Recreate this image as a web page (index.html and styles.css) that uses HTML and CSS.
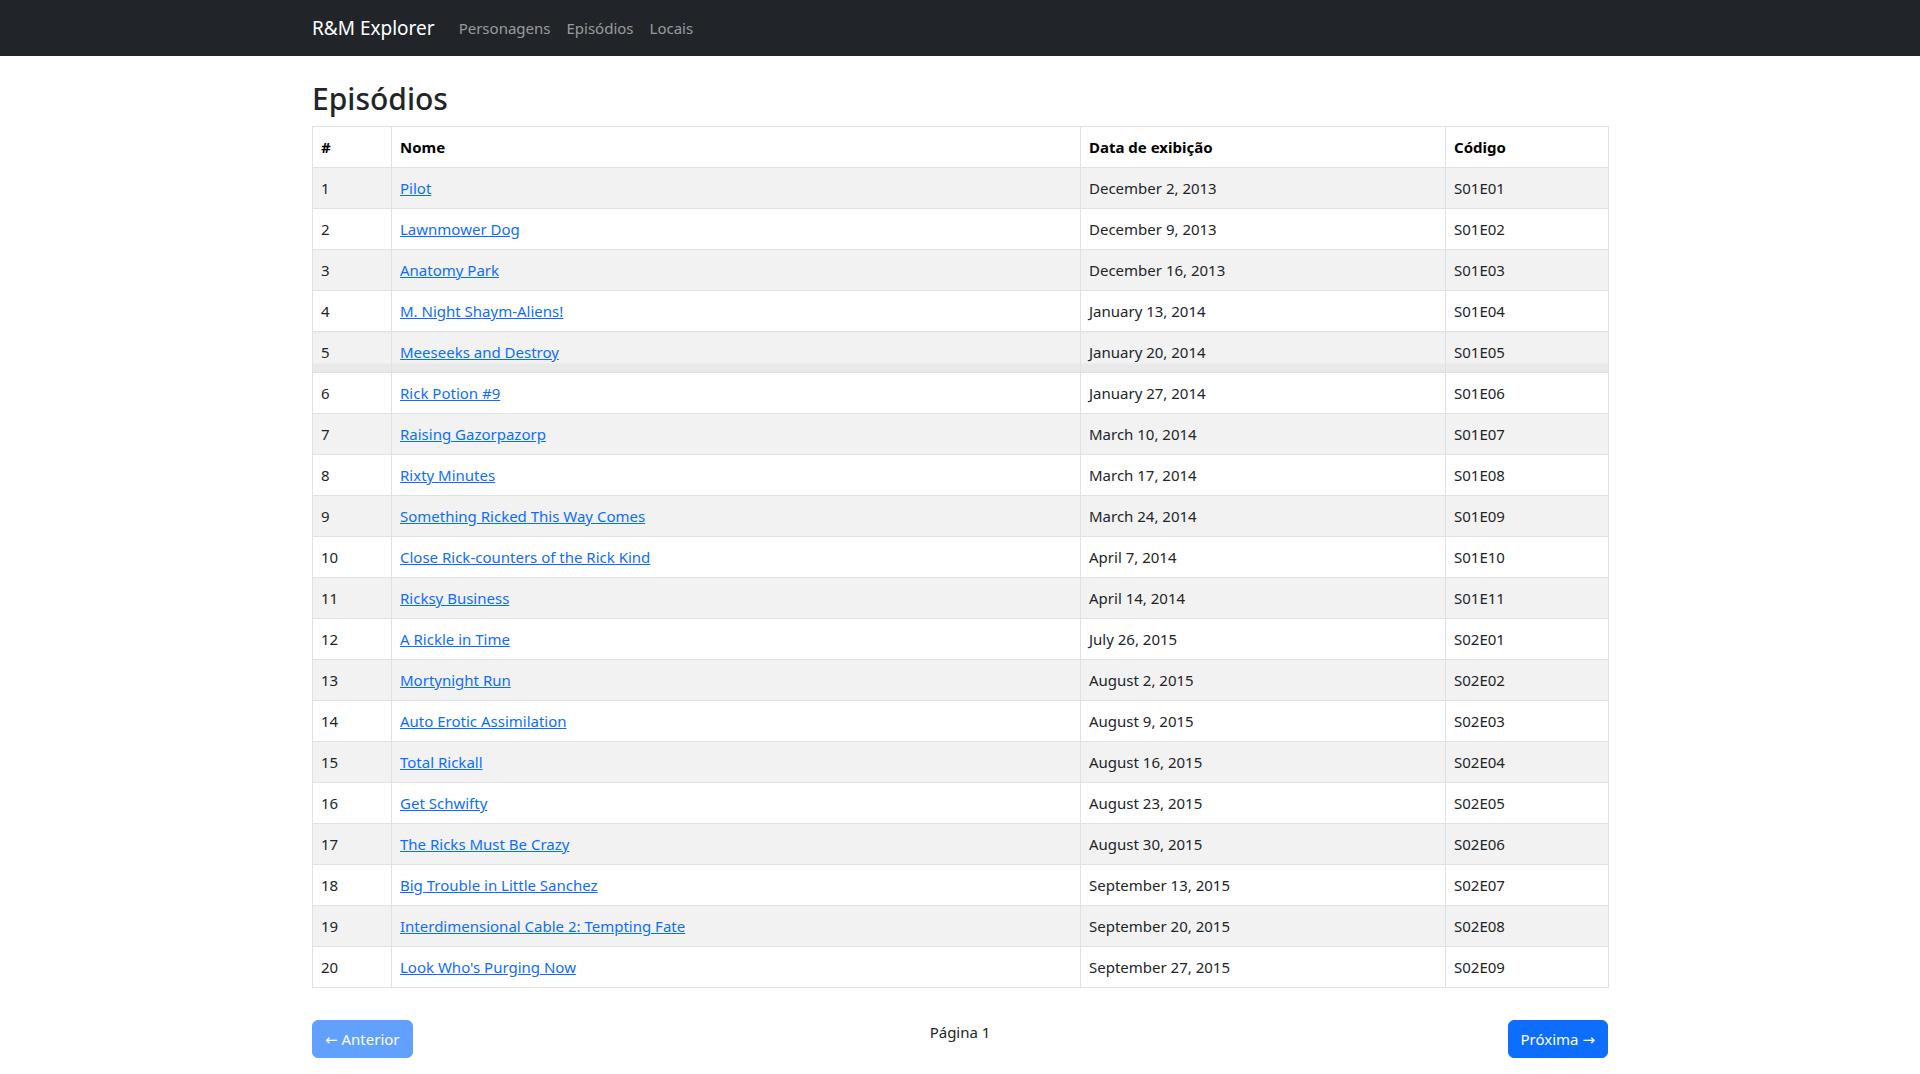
FILE: index.html
```html
<!DOCTYPE html>
<html lang="pt">
<head>
<meta charset="utf-8">
<title>R&amp;M Explorer</title>
<link rel="stylesheet" href="styles.css">
</head>
<body>
<nav class="navbar">
  <div class="container nav-inner">
    <a class="brand" href="#">R&amp;M Explorer</a>
    <ul class="nav-links">
      <li><a href="#">Personagens</a></li>
      <li><a href="#">Episódios</a></li>
      <li><a href="#">Locais</a></li>
    </ul>
  </div>
</nav>
<main class="container main">
  <h1 class="title">Episódios</h1>
  <table class="table">
    <colgroup>
      <col class="c-id"><col class="c-name"><col class="c-date"><col class="c-code">
    </colgroup>
    <thead>
      <tr><th>#</th><th>Nome</th><th>Data de exibição</th><th>Código</th></tr>
    </thead>
    <tbody>
      <tr><td>1</td><td><a href="#">Pilot</a></td><td>December 2, 2013</td><td>S01E01</td></tr>
      <tr><td>2</td><td><a href="#">Lawnmower Dog</a></td><td>December 9, 2013</td><td>S01E02</td></tr>
      <tr><td>3</td><td><a href="#">Anatomy Park</a></td><td>December 16, 2013</td><td>S01E03</td></tr>
      <tr><td>4</td><td><a href="#">M. Night Shaym-Aliens!</a></td><td>January 13, 2014</td><td>S01E04</td></tr>
      <tr class="artifact"><td>5</td><td><a href="#">Meeseeks and Destroy</a></td><td>January 20, 2014</td><td>S01E05</td></tr>
      <tr><td>6</td><td><a href="#">Rick Potion #9</a></td><td>January 27, 2014</td><td>S01E06</td></tr>
      <tr><td>7</td><td><a href="#">Raising Gazorpazorp</a></td><td>March 10, 2014</td><td>S01E07</td></tr>
      <tr><td>8</td><td><a href="#">Rixty Minutes</a></td><td>March 17, 2014</td><td>S01E08</td></tr>
      <tr><td>9</td><td><a href="#">Something Ricked This Way Comes</a></td><td>March 24, 2014</td><td>S01E09</td></tr>
      <tr><td>10</td><td><a href="#">Close Rick-counters of the Rick Kind</a></td><td>April 7, 2014</td><td>S01E10</td></tr>
      <tr><td>11</td><td><a href="#">Ricksy Business</a></td><td>April 14, 2014</td><td>S01E11</td></tr>
      <tr><td>12</td><td><a href="#">A Rickle in Time</a></td><td>July 26, 2015</td><td>S02E01</td></tr>
      <tr><td>13</td><td><a href="#">Mortynight Run</a></td><td>August 2, 2015</td><td>S02E02</td></tr>
      <tr><td>14</td><td><a href="#">Auto Erotic Assimilation</a></td><td>August 9, 2015</td><td>S02E03</td></tr>
      <tr><td>15</td><td><a href="#">Total Rickall</a></td><td>August 16, 2015</td><td>S02E04</td></tr>
      <tr><td>16</td><td><a href="#">Get Schwifty</a></td><td>August 23, 2015</td><td>S02E05</td></tr>
      <tr><td>17</td><td><a href="#">The Ricks Must Be Crazy</a></td><td>August 30, 2015</td><td>S02E06</td></tr>
      <tr><td>18</td><td><a href="#">Big Trouble in Little Sanchez</a></td><td>September 13, 2015</td><td>S02E07</td></tr>
      <tr><td>19</td><td><a href="#">Interdimensional Cable 2: Tempting Fate</a></td><td>September 20, 2015</td><td>S02E08</td></tr>
      <tr><td>20</td><td><a href="#">Look Who's Purging Now</a></td><td>September 27, 2015</td><td>S02E09</td></tr>
    </tbody>
  </table>
  <div class="pager">
    <button class="btn btn-disabled" disabled><span class="arrow">←</span> Anterior</button>
    <span class="page-label">Página 1</span>
    <button class="btn">Próxima <span class="arrow">→</span></button>
  </div>
</main>
</body>
</html>
```
FILE: styles.css
```css
* { box-sizing: border-box; }
html, body { margin: 0; padding: 0; }
body {
  font-family: "Noto Sans", "Open Sans", sans-serif;
  font-size: 15px;
  line-height: 24px;
  color: #212529;
  background: #fff;
}
.container {
  width: 1320px;
  margin: 0 auto;
  padding: 0 12px;
}
.navbar {
  background: #212529;
  height: 56px;
}
.nav-inner {
  display: flex;
  align-items: center;
  height: 56px;
}
.brand {
  color: #fff;
  text-decoration: none;
  font-size: 19px;
  line-height: 30px;
  margin-right: 16px;
}
.nav-links {
  display: flex;
  list-style: none;
  margin: 0;
  padding: 0;
}
.nav-links a {
  display: block;
  padding: 8px 8px;
  color: rgba(255,255,255,.55);
  text-decoration: none;
}
.main { padding-top: 24px; }
.title {
  font-size: 30px;
  font-weight: 500;
  line-height: 38px;
  margin: 0 0 8px 0;
}
.table {
  width: 100%;
  table-layout: fixed;
  border-collapse: collapse;
  margin-bottom: 32px;
  border: 1px solid #dee2e6;
}
.table th, .table td {
  border: 1px solid #dee2e6;
  padding: 8px 8px;
  text-align: left;
  vertical-align: top;
}
.table th { font-weight: 700; color: #000; }
.table td { color: #212529; }
.c-id { width: 79px; }
.c-name { width: 689px; }
.c-date { width: 365px; }
.c-code { width: 163px; }
.table tbody tr:nth-child(odd) td { background: #f2f2f2; }
.table tbody tr.artifact td {
  background: linear-gradient(#f2f2f2 0, #f2f2f2 31px, #e9e9e9 31px, #e9e9e9 100%);
}
.table a { color: #0d6efd; text-decoration: underline; }
.pager {
  display: flex;
  justify-content: space-between;
  align-items: flex-start;
  padding-bottom: 16px;
}
.page-label { line-height: 24px; }
.btn {
  font-family: inherit;
  font-size: 15px;
  line-height: 24px;
  height: 38px;
  padding: 6px 12px;
  border: 1px solid #0d6efd;
  border-radius: 6px;
  background: #0d6efd;
  color: #fff;
  cursor: pointer;
}
.arrow {
  font-family: "DejaVu Sans", sans-serif;
  font-size: 15px;
  line-height: 0;
}
.btn-disabled { opacity: .65; }
```
